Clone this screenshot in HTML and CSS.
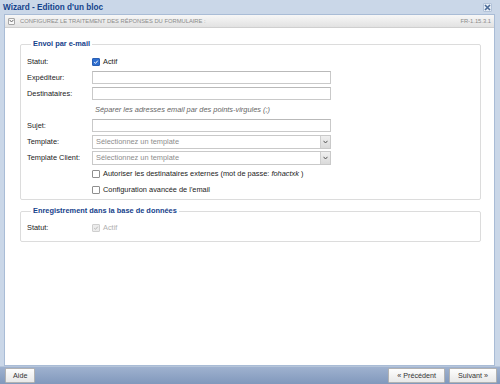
FILE: index.html
```html
<!DOCTYPE html>
<html lang="fr">
<head>
    <meta charset="UTF-8">
    <title>Wizard - Edition d'un bloc</title>
    <link rel="stylesheet" href="styles.css">
</head>
<body>
<div class="window">
    <div class="titlebar">
        <span class="title">Wizard - Edition d'un bloc</span>
        <span class="close">
            <svg width="7" height="7" viewBox="0 0 7 7"><path d="M1 1L6 6M6 1L1 6" stroke="#4a6a96" stroke-width="1.6"/></svg>
        </span>
    </div>
    <div class="frame">
        <div class="toolbar">
            <span class="tool-icon">
                <svg width="5" height="4" viewBox="0 0 5 4"><path d="M0.5 0.8L2.5 3L4.5 0.8" fill="none" stroke="#666" stroke-width="1"/></svg>
            </span>
            <span class="tool-text">Configurez le traitement des réponses du formulaire :</span>
            <span class="version">FR-1.15.3.1</span>
        </div>
        <div class="content">
            <fieldset class="group">
                <legend>Envoi par e-mail</legend>
                <div class="form">
                    <label>Statut:</label>
                    <div class="field">
                        <span class="check checked">
                            <svg width="8" height="8" viewBox="0 0 8 8"><path d="M1.6 4.2L3.3 5.8L6.4 2.2" fill="none" stroke="#fff" stroke-width="1.3"/></svg>
                        </span>
                        <span>Actif</span>
                    </div>

                    <label>Expéditeur:</label>
                    <div class="input"></div>

                    <label>Destinataires:</label>
                    <div class="input"></div>

                    <span></span>
                    <div class="hint">Séparer les adresses email par des points-virgules (;)</div>

                    <label>Sujet:</label>
                    <div class="input"></div>

                    <label>Template:</label>
                    <div class="select">
                        <span class="placeholder">Sélectionnez un template</span>
                        <span class="arrow">
                            <svg width="5" height="4" viewBox="0 0 5 4"><path d="M0.5 0.8L2.5 3L4.5 0.8" fill="none" stroke="#555" stroke-width="1"/></svg>
                        </span>
                    </div>

                    <label>Template Client:</label>
                    <div class="select">
                        <span class="placeholder">Sélectionnez un template</span>
                        <span class="arrow">
                            <svg width="5" height="4" viewBox="0 0 5 4"><path d="M0.5 0.8L2.5 3L4.5 0.8" fill="none" stroke="#555" stroke-width="1"/></svg>
                        </span>
                    </div>

                    <span></span>
                    <div class="field wide">
                        <span class="check"></span>
                        <span>Autoriser les destinataires externes (mot de passe: <em>fohactxk</em> )</span>
                    </div>

                    <span></span>
                    <div class="field wide">
                        <span class="check"></span>
                        <span>Configuration avancée de l'email</span>
                    </div>
                </div>
            </fieldset>

            <fieldset class="group second">
                <legend>Enregistrement dans la base de données</legend>
                <div class="form">
                    <label>Statut:</label>
                    <div class="field disabled">
                        <span class="check grey">
                            <svg width="8" height="8" viewBox="0 0 8 8"><path d="M1.6 4.2L3.3 5.8L6.4 2.2" fill="none" stroke="#b8b8b8" stroke-width="1.3"/></svg>
                        </span>
                        <span>Actif</span>
                    </div>
                </div>
            </fieldset>
        </div>
    </div>
    <div class="footer">
        <button class="btn">Aide</button>
        <div class="nav">
            <button class="btn">« Précédent</button>
            <button class="btn">Suivant »</button>
        </div>
    </div>
</div>
</body>
</html>
```

FILE: styles.css
```css
* {
    box-sizing: border-box;
}

body {
    margin: 0;
    font-family: "Liberation Sans", Arial, sans-serif;
    font-size: 7.4px;
    color: #222;
}

.window {
    width: 500px;
    height: 384px;
    display: flex;
    flex-direction: column;
    background-color: #cad7e8;
}

.titlebar {
    height: 14px;
    display: flex;
    align-items: center;
    justify-content: space-between;
    padding: 0 8px 0 3px;
}

.title {
    font-weight: bold;
    font-size: 8.2px;
    color: #15428b;
}

.close {
    width: 9px;
    height: 9px;
    display: flex;
    align-items: center;
    justify-content: center;
    background-color: #e6edf6;
    border: 1px solid #b3c3d9;
    border-radius: 1px;
}

.frame {
    flex: 1;
    display: flex;
    flex-direction: column;
    margin: 0 5px 0 4px;
    background-color: #fff;
    border: 1px solid #a9bcd6;
}

.toolbar {
    height: 13px;
    display: flex;
    align-items: center;
    padding: 0 3px 0 3px;
    background: linear-gradient(#f7f7f7, #e2e2e2);
    border-bottom: 1px solid #cfcfcf;
    color: #8a8a8a;
    font-size: 5.8px;
}

.tool-icon {
    width: 7px;
    height: 7px;
    display: flex;
    align-items: center;
    justify-content: center;
    border: 1px solid #a6a6a6;
    border-radius: 1px;
    background-color: #fafafa;
    margin-right: 5px;
}

.tool-text {
    text-transform: uppercase;
    flex: 1;
}

.version {
    font-size: 5.8px;
}

.content {
    flex: 1;
    padding: 11px 13px 0 15px;
}

.group {
    margin: 0;
    padding: 6px 8px 3px 6px;
    border: 1px solid #dcdcdc;
    border-radius: 2px;
}

.group.second {
    margin-top: 6px;
    padding-top: 5px;
    padding-bottom: 7px;
}

legend {
    padding: 0 2px;
    margin-left: 4px;
    font-weight: bold;
    line-height: 10px;
    color: #15428b;
}

.form {
    display: grid;
    grid-template-columns: 65px 239px;
    grid-auto-rows: 13px;
    row-gap: 3px;
    align-items: center;
}

.form label {
    color: #222;
}

.form > :nth-child(7), .form > :nth-child(8) {
    height: 10px;
}

.field {
    display: flex;
    align-items: center;
    gap: 3px;
    color: #222;
}

.field.wide {
    width: 320px;
}

.field em {
    font-style: italic;
}

.field.disabled {
    color: #b0b0b0;
}

.check {
    width: 8px;
    height: 8px;
    display: flex;
    align-items: center;
    justify-content: center;
    border: 1px solid #8f8f8f;
    border-radius: 1px;
    background-color: #fff;
}

.check.checked {
    background-color: #2f6fd0;
    border-color: #2a5fb3;
}

.check.grey {
    background-color: #ececec;
    border-color: #cfcfcf;
}

.input {
    height: 13px;
    border: 1px solid #c9c9c9;
    border-top-color: #b9b9b9;
    background-color: #fff;
}

.hint {
    padding-left: 3px;
    font-style: italic;
    color: #666;
    line-height: 10px;
}

.select {
    height: 14px;
    display: flex;
    align-items: center;
    border: 1px solid #c9c9c9;
    background-color: #fff;
}

.placeholder {
    flex: 1;
    padding-left: 3px;
    color: #8c8c8c;
}

.arrow {
    width: 10px;
    height: 100%;
    display: flex;
    align-items: center;
    justify-content: center;
    background: linear-gradient(#f0f0f0, #dadada);
    border-left: 1px solid #cfcfcf;
}

.footer {
    height: 18px;
    display: flex;
    align-items: center;
    justify-content: space-between;
    padding: 0 3px 0 5px;
    background: linear-gradient(#9fb2cf, #8198bc);
    border-top: 1px solid #b6c5da;
}

.nav {
    display: flex;
    gap: 4px;
}

.btn {
    height: 15px;
    padding: 0 7px;
    font-family: "Liberation Sans", Arial, sans-serif;
    font-size: 7.2px;
    color: #333;
    background: linear-gradient(#fdfdfd, #e8e8e8);
    border: 1px solid #b2b2b2;
    border-radius: 1px;
}

.nav .btn {
    padding: 0 8px;
}
```
